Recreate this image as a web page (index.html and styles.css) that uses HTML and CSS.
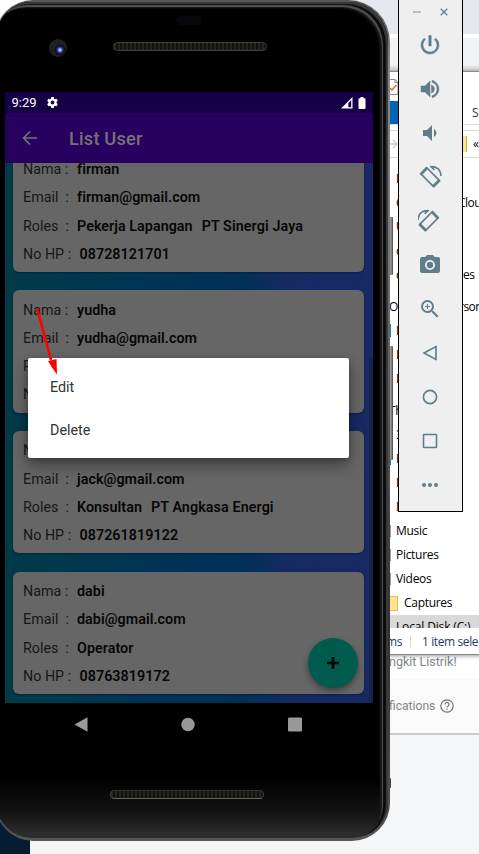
FILE: index.html
```html
<!DOCTYPE html>
<html lang="id">
<head>
<meta charset="utf-8">
<title>List User</title>
<link rel="stylesheet" href="styles.css">
</head>
<body>
<div class="desktop">
  <section class="browser">
    <div class="browser-tabs"></div>
    <div class="browser-gap"></div>
    <div class="browser-bar"></div>
    <div class="browser-body"></div>
    <div class="page-line">ngkit Listrik!</div>
    <div class="page-foot"><span>fications</span>
      <svg class="help" viewBox="0 0 14 14"><circle cx="7" cy="7" r="6.200"/><path d="M5 5.600a2 2 0 1 1 3 1.600q-1 .6-1 1.400"/><path d="M7 9.800v1.300"/></svg>
    </div>
    <div class="page-end"></div>
  </section>

  <section class="explorer">
    <div class="ex-title">
      <svg class="doc" viewBox="0 0 9 16"><path d="M0 .5h5l3 3v12H0M5 .5v3h3" fill="#fff" stroke="#8a8a8a"/><path d="M0 9l2 2 4.500-5" fill="none" stroke="#e8622c" stroke-width="1.400"/></svg>
    </div>
    <div class="ex-ribbon"><span class="ex-file"></span><span>S</span></div>
    <div class="ex-address"><svg class="fwd" viewBox="0 0 8 10"><path d="M0 5h7M3 1l4 4-4 4"/></svg><i class="folder-edge"></i><span>«</span></div>
    <ul class="tree">
      <li><b>D</b></li>
      <li><b>C</b><span>Clou</span></li>
      <li><b>U</b></li>
      <li><b>c</b></li>
      <li><b>c</b><span>es</span></li>
      <li class="root"><b>O</b><span>rson</span></li>
      <li class="blue"><b>D</b></li>
      <li><b>D</b></li>
      <li><b>D</b></li>
      <li class="root"><b>Th</b></li>
      <li><b>3</b></li>
      <li class="blue"><b>D</b></li>
      <li><b>D</b></li>
      <li><b>D</b></li>
      <li class="grey"><b>Music</b></li>
      <li class="grey"><b>Pictures</b></li>
      <li class="grey"><b>Videos</b></li>
      <li class="sub"><i class="folder"></i><b>Captures</b></li>
      <li class="selected"><b>Local Disk (C:)</b></li>
    </ul>
    <div class="ex-status"><span>ms</span><i></i><span>1 item sele</span></div>
  </section>

  <div class="taskbar"></div>
  <div class="side-key volume"></div>
  <div class="side-key power"></div>
  <div class="side-key notch"></div>

  <main class="phone">
    <div class="phone-face">
      <header class="phone-top">
        <i class="sensor"></i>
        <i class="lens"></i>
        <i class="speaker"></i>
      </header>
      <div class="screen">
        <div class="status">
          <span>9:29</span>
          <svg class="gear" viewBox="0 0 24 24"><path d="M19.430 12.980a7.800 7.800 0 0 0 0-1.960l2.110-1.650a.5.5 0 0 0 .12-.64l-2-3.460a.5.5 0 0 0-.61-.22l-2.490 1a7.300 7.300 0 0 0-1.690-.98l-.38-2.650A.5.5 0 0 0 14 2h-4a.5.5 0 0 0-.49.42l-.38 2.650c-.61.25-1.170.59-1.690.98l-2.490-1a.5.5 0 0 0-.61.22l-2 3.460a.5.5 0 0 0 .12.64l2.110 1.650a7.800 7.800 0 0 0 0 1.960l-2.110 1.650a.5.5 0 0 0-.12.640l2 3.460c.12.220.39.300.61.220l2.490-1c.52.400 1.080.730 1.690.980l.38 2.650c.03.240.24.420.49.420h4c.25 0 .46-.18.49-.42l.38-2.650a7.300 7.300 0 0 0 1.690-.98l2.490 1c.23.090.49 0 .61-.22l2-3.460a.5.5 0 0 0-.12-.64zM12 15.500a3.500 3.500 0 1 1 0-7 3.500 3.500 0 0 1 0 7z"/></svg>
          <svg class="signal" viewBox="0 0 12 12"><path d="M0 11.500 11.500 0v11.500zM7.300 10.200h2.900V3.200L7.300 6z" fill-rule="evenodd"/></svg>
          <svg class="battery" viewBox="0 0 7 12"><path d="M2 0h3v1.300h1.200q.8 0 .8.800v9q0 .9-.8.900H.8q-.8 0-.8-.9v-9q0-.8.8-.8H2z"/></svg>
        </div>
        <div class="appbar">
          <svg class="back" viewBox="0 0 16 16"><path d="M15 8H2M8 1.500 1.500 8 8 14.500"/></svg>
          <h1>List User</h1>
        </div>
        <div class="list">
          <article class="card first">
            <p><span>Nama :</span><b>firman</b></p>
            <p><span>Email&nbsp; :</span><b>firman@gmail.com</b></p>
            <p><span>Roles&nbsp; :</span><b>Pekerja Lapangan</b><b class="firm">PT Sinergi Jaya</b></p>
            <p class="hp"><span>No HP :</span><b>08728121701</b></p>
          </article>
          <article class="card">
            <p><span>Nama :</span><b>yudha</b></p>
            <p><span>Email&nbsp; :</span><b>yudha@gmail.com</b></p>
            <p><span>R</span></p>
            <p class="hp"><span>N</span></p>
          </article>
          <article class="card">
            <p><span>Nama :</span><b>jack</b></p>
            <p><span>Email&nbsp; :</span><b>jack@gmail.com</b></p>
            <p><span>Roles&nbsp; :</span><b>Konsultan</b><b class="firm">PT Angkasa Energi</b></p>
            <p class="hp"><span>No HP :</span><b>087261819122</b></p>
          </article>
          <article class="card">
            <p><span>Nama :</span><b>dabi</b></p>
            <p><span>Email&nbsp; :</span><b>dabi@gmail.com</b></p>
            <p><span>Roles&nbsp; :</span><b>Operator</b></p>
            <p class="hp"><span>No HP :</span><b>08763819172</b></p>
          </article>
          <i class="scrollbar"></i>
        </div>
        <button class="fab" type="button"><svg viewBox="0 0 12 12"><path d="M6 0v12M0 6h12"/></svg></button>
        <div class="menu"><div>Edit</div><div>Delete</div></div>
      </div>
      <nav class="navkeys">
        <svg viewBox="0 0 14 15"><path d="M13.500.3v14.400L.5 7.500z"/></svg>
        <svg viewBox="0 0 14 14"><circle cx="7" cy="7" r="6.700"/></svg>
        <svg viewBox="0 0 14 14"><rect width="14" height="14" rx="1"/></svg>
      </nav>
      <i class="speaker bottom"></i>
    </div>
  </main>

  <aside class="tools">
    <div class="win">
      <svg viewBox="0 0 8 8"><path d="M0 4h8" stroke="#9db0b9" stroke-width="1.500"/></svg>
      <svg viewBox="0 0 8 8"><path d="M.7.7l6.600 6.600M7.300.7.7 7.300" stroke-width="1.300"/></svg>
    </div>
    <svg viewBox="0 0 24 24"><path class="f heavy" d="M13.200 2.500h-2.400v10.500h2.400zm4.630 2.670-1.420 1.420A6.920 6.920 0 0 1 19 12a7 7 0 1 1-11.420-5.420L6.170 5.170A9 9 0 1 0 21 12a8.930 8.930 0 0 0-3.170-6.830z"/></svg>
    <svg viewBox="0 0 24 24"><path class="f heavy" d="M3 9v6h4l5 5V4L7 9zm10.500-1.030v8.060A4.500 4.500 0 0 0 16.500 12a4.500 4.500 0 0 0-3-4.030zM14 3.230v2.060a7 7 0 0 1 0 13.420v2.060a9 9 0 0 0 0-17.540z"/></svg>
    <svg viewBox="0 0 24 24"><path class="f" d="M18.500 12A4.500 4.500 0 0 0 16 7.970v8.050A4.500 4.500 0 0 0 18.500 12zM5 9v6h4l5 5V4L9 9z"/></svg>
    <svg viewBox="0 0 24 24"><g id="rot"><path d="M9 3 21.300 15.300 15.300 21.300 3 9z" stroke-width="1.700" stroke-linejoin="round"/><path d="M2.600 9.400 9.400 2.600M14.900 21.700l6.800-6.800" stroke-width="2.800"/><path d="M12 1.700Q22.300.8 23 11M13.200 1.700l3.200 3.200" stroke-width="1.600"/></g></svg>
    <svg viewBox="0 0 24 24"><use href="#rot" transform="matrix(-1 0 0 1 23 0)"/></svg>
    <svg viewBox="0 0 24 24"><path class="f" fill-rule="evenodd" d="M9 2 7.170 4H4a2 2 0 0 0-2 2v12c0 1.100.9 2 2 2h16a2 2 0 0 0 2-2V6a2 2 0 0 0-2-2h-3.170L15 2zm3 15a5 5 0 1 1 0-10 5 5 0 0 1 0 10z"/><circle class="f" cx="12" cy="12" r="3.200"/></svg>
    <svg viewBox="0 0 24 24"><path class="f" d="M15.500 14h-.79l-.28-.27A6.470 6.470 0 0 0 16 9.500 6.500 6.500 0 1 0 9.500 16c1.610 0 3.090-.59 4.230-1.570l.27.280v.79l5 4.990L20.490 19zm-6 0a4.500 4.500 0 1 1 0-9 4.500 4.500 0 0 1 0 9z"/><path d="M9.500 7v5M7 9.500h5" stroke-width="1"/></svg>
    <svg viewBox="0 0 24 24"><path d="M18 5.500v13L6 12z" stroke-width="1.600"/></svg>
    <svg viewBox="0 0 24 24"><circle cx="12" cy="12" r="6.600" stroke-width="1.600"/></svg>
    <svg viewBox="0 0 24 24"><rect x="5.500" y="5.500" width="13" height="13" rx=".6" stroke-width="1.600"/></svg>
    <svg viewBox="0 0 24 24"><g class="f"><circle cx="6" cy="12" r="2"/><circle cx="12" cy="12" r="2"/><circle cx="18" cy="12" r="2"/></g></svg>
  </aside>

  <svg class="pointer" viewBox="0 0 24 70"><path d="M2 2 16 54" stroke="#f00" stroke-width="2.600"/><path d="m13 55 8.500-2 .5 15.500q-5-6.500-9-13.500z" fill="#f00"/></svg>
</div>
</body>
</html>
```
FILE: styles.css
```css
* { box-sizing: border-box; }
body { margin: 0; background: #fff; }
h1, p, ul { margin: 0; padding: 0; }
svg { display: block; }

.desktop { position: relative; width: 479px; height: 854px; overflow: hidden; background: #fff; }

/* Browser window at the back */
.browser { position: absolute; inset: 0; display: flex; flex-direction: column; font-family: Roboto, sans-serif; color: #80868b; }
.browser-tabs { height: 34px; background: linear-gradient(90deg, #fff 60px, #e5e9ed 60px); }
.browser-gap { height: 4px; }
.browser-bar { height: 33px; background: linear-gradient(#f1f3f5 80%, #c8cacc); margin-left: 60px; }
.browser-body { height: 580px; }
.page-line { height: 27px; padding: 1px 0 0 389px; font-size: 12.500px; line-height: 19px; white-space: nowrap; }
.page-foot { height: 57px; padding-left: 389px; display: flex; align-items: center; gap: 5px; font-size: 12.100px; background: #fafafa; border-bottom: 2px solid #c9cacc; }
.help { width: 14px; height: 14px; fill: none; stroke: #6f7377; stroke-width: 1.200; }
.page-end { flex: 1; background: #f5f6f8; }
.taskbar { position: absolute; left: 0; top: 800px; width: 30px; height: 54px; background: #051c33; }

/* File explorer */
.explorer { position: absolute; left: 384px; top: 71px; width: 110px; height: 584px; display: flex; flex-direction: column; background: #fff; border-top: 1px solid #8c8c8c; border-bottom: 1px solid #8b8b8b; box-shadow: 0 1px 4px #0006; font: 12px/24px "Open Sans", "Noto Sans", sans-serif; letter-spacing: -.3px; color: #000; }
.ex-title { height: 30px; padding: 7px 0 0 6px; }
.doc { width: 9px; height: 16px; }
.ex-ribbon { height: 24px; display: flex; border-bottom: 1px solid #d9d9d9; color: #333; }
.ex-file { width: 88px; background: linear-gradient(90deg, #0064b5 20px, #fff 20px); }
.ex-address { height: 30px; margin-top: 5px; padding-left: 6px; display: flex; align-items: center; border: solid #d9d9d9; border-width: 1px 0; }
.fwd { width: 8px; height: 10px; fill: none; stroke: #ccc; stroke-width: 1.400; }
.folder-edge { width: 4px; height: 16px; margin: 0 6px 0 65px; background: #ffe48f; border-right: 1px solid #dfae2c; }
.tree { list-style: none; height: 470px; flex: none; padding-top: 9px; overflow: hidden; }
.tree li { height: 24px; padding-left: 12px; display: flex; white-space: nowrap; }
.tree b { font-weight: 400; min-width: 62px; }
.tree span { letter-spacing: -.5px; }
.tree .root { margin-top: 8px; padding-left: 5px; }
.tree .root b { min-width: 70px; }
.tree .blue { background: linear-gradient(90deg, transparent 6px, #1680d0 6px 7px, transparent 7px) 0 5px / 100% 13px no-repeat; }
.tree .grey { background: linear-gradient(90deg, transparent 6px, #999 6px 7px, transparent 7px) 0 6px / 100% 12px no-repeat; }
.tree li:nth-child(5) b { min-width: 67px; }
.tree .sub { padding-left: 4px; align-items: center; gap: 6px; }
.folder { width: 10px; height: 15px; background: #ffe58f; border: 1px solid #e5bd48; }
.tree .selected { background: #d9d9d9; letter-spacing: -.15px; }
.ex-status { flex: 1; display: flex; align-items: center; padding: 2px 0 0 2px; background: #fff; color: #1e3a5f; letter-spacing: -.4px; white-space: nowrap; }
.ex-status i { width: 1px; height: 12px; margin: 0 11px 0 8px; background: #ddd; }

/* Phone body */
.side-key { position: absolute; left: 386px; width: 7px; background: linear-gradient(90deg, #555, #999 70%, #444); border-radius: 1px; }
.side-key.volume { top: 217px; height: 58px; }
.side-key.power { top: 346px; height: 114px; }
.side-key.notch { top: 778px; height: 10px; width: 5px; background: #444; }
.phone { position: absolute; left: -5px; top: 0; width: 395px; height: 841px; padding: 2px 2px 3px 1px; border-radius: 38px 42px 38px 38px; background: linear-gradient(#555, #8a8a8a 8%, #777 30%, #303030 75%, #555); }
.phone-face { height: 100%; padding: 0 14px 0 9px; border-radius: 36px 40px 36px 36px; background: linear-gradient(#000 93%, #141414 97%, #2c2c2c 99.500%); box-shadow: inset -2px 2px 1px #3c3c3c, inset -5px 3px 1px #0a0a0a, inset -6px 5px 1px #55555a, inset -8px 6px 2px #1c1c1c; }
.phone-top { height: 90px; position: relative; }
.sensor { position: absolute; left: 171px; top: 14px; width: 26px; height: 9px; border-radius: 5px; background: #07080c; }
.lens { position: absolute; left: 44px; top: 37px; width: 18px; height: 18px; border-radius: 50%; background: radial-gradient(circle at 11px 11px, #a9b9ff 0 1px, #2c4299 2.500px, #0c1230 4px, #101116 5px, #202022 6px); }
.speaker { position: absolute; left: 108px; top: 40px; width: 154px; height: 9px; border-radius: 5px; border: 1px solid #44423e; background: repeating-linear-gradient(90deg, #26241f 0 2px, #12110f 2px 4px); }
.speaker.bottom { position: static; display: block; margin: 58px 0 0 105px; border-color: #33322e #44433f #66655f; }

.screen { position: relative; height: 611px; width: 368px; display: flex; flex-direction: column; font-family: Roboto, sans-serif; }
.status { flex: none; height: 21px; display: flex; align-items: center; padding: 0 7px 0 6.500px; background: #160045; color: #fff; font-size: 13px; }
.status svg { fill: #fff; }
.gear { width: 13px; height: 13px; margin: 0 auto 0 9px; }
.signal { width: 12px; height: 12px; margin-right: 5px; }
.battery { width: 8px; height: 12px; }
.appbar { flex: none; height: 50px; display: flex; align-items: center; padding-left: 17px; background: #280060; color: #747474; }
.back { width: 16px; height: 16px; fill: none; stroke: #747474; stroke-width: 1.700; }
.appbar h1 { margin-left: 31px; font-size: 18.300px; font-weight: 500; line-height: 24px; letter-spacing: .15px; padding-top: 2px; }
.list { position: relative; flex: 1; overflow: hidden; padding: 0 9px 0 8px; background: linear-gradient(90deg, #003b48, #003454 35%, #003058 65%, #142b62 76%, #182964); }
.card { height: 122.300px; margin-bottom: 18.450px; padding: 5.500px 10px 0; border-radius: 6px; background: #666; color: #161616; box-shadow: 0 1px 2px #0005; font-size: 14.300px; line-height: 28.250px; }
.card.first { margin-top: -13.500px; }
.card p { display: flex; white-space: nowrap; }
.card span { width: 54px; }
.card b { font-weight: 600; color: #070707; letter-spacing: .05px; }
.card .firm { margin-left: 9px; letter-spacing: .1px; }
.card .hp span { width: 56.500px; }
.scrollbar { position: absolute; right: 0; top: 194px; bottom: 0; width: 4px; background: #162350; }
.fab { position: absolute; right: 15px; bottom: 15px; width: 50px; height: 50px; padding: 0; border: 0; border-radius: 50%; background: #005b4f; display: grid; place-items: center; box-shadow: 0 3px 6px #0006; }
.fab svg { width: 12px; height: 12px; stroke: #000; stroke-width: 2.600; }
.menu { position: absolute; left: 23px; top: 266px; width: 321px; height: 100px; padding: 8px 22px 0; border-radius: 2px; background: #fff; color: #333; font-size: 14.300px; line-height: 43px; box-shadow: 0 8px 16px #0005, 0 2px 6px #0004; }
.navkeys { display: flex; justify-content: space-between; padding: 14px 71px 0 69px; width: 368px; }
.navkeys svg { width: 14px; height: 15px; fill: #999; }

/* Emulator tool strip */
.tools { position: absolute; left: 398px; top: -1px; width: 65px; height: 513px; display: flex; flex-direction: column; align-items: center; gap: 20px; padding-right: 1px; background: #efefef; border: 1px solid #000; }
.tools svg { width: 24px; height: 24px; fill: none; stroke: #607d8b; flex: none; }
.tools .f { fill: #607d8b; stroke: none; }
.tools .heavy { stroke: #607d8b; stroke-width: .5; }
.tools .win { height: 13px; padding: 8px 0 0 1px; display: flex; gap: 19px; }
.tools .win svg { width: 8px; height: 8px; }

.pointer { position: absolute; left: 35px; top: 306px; width: 24px; height: 70px; fill: none; }
```
